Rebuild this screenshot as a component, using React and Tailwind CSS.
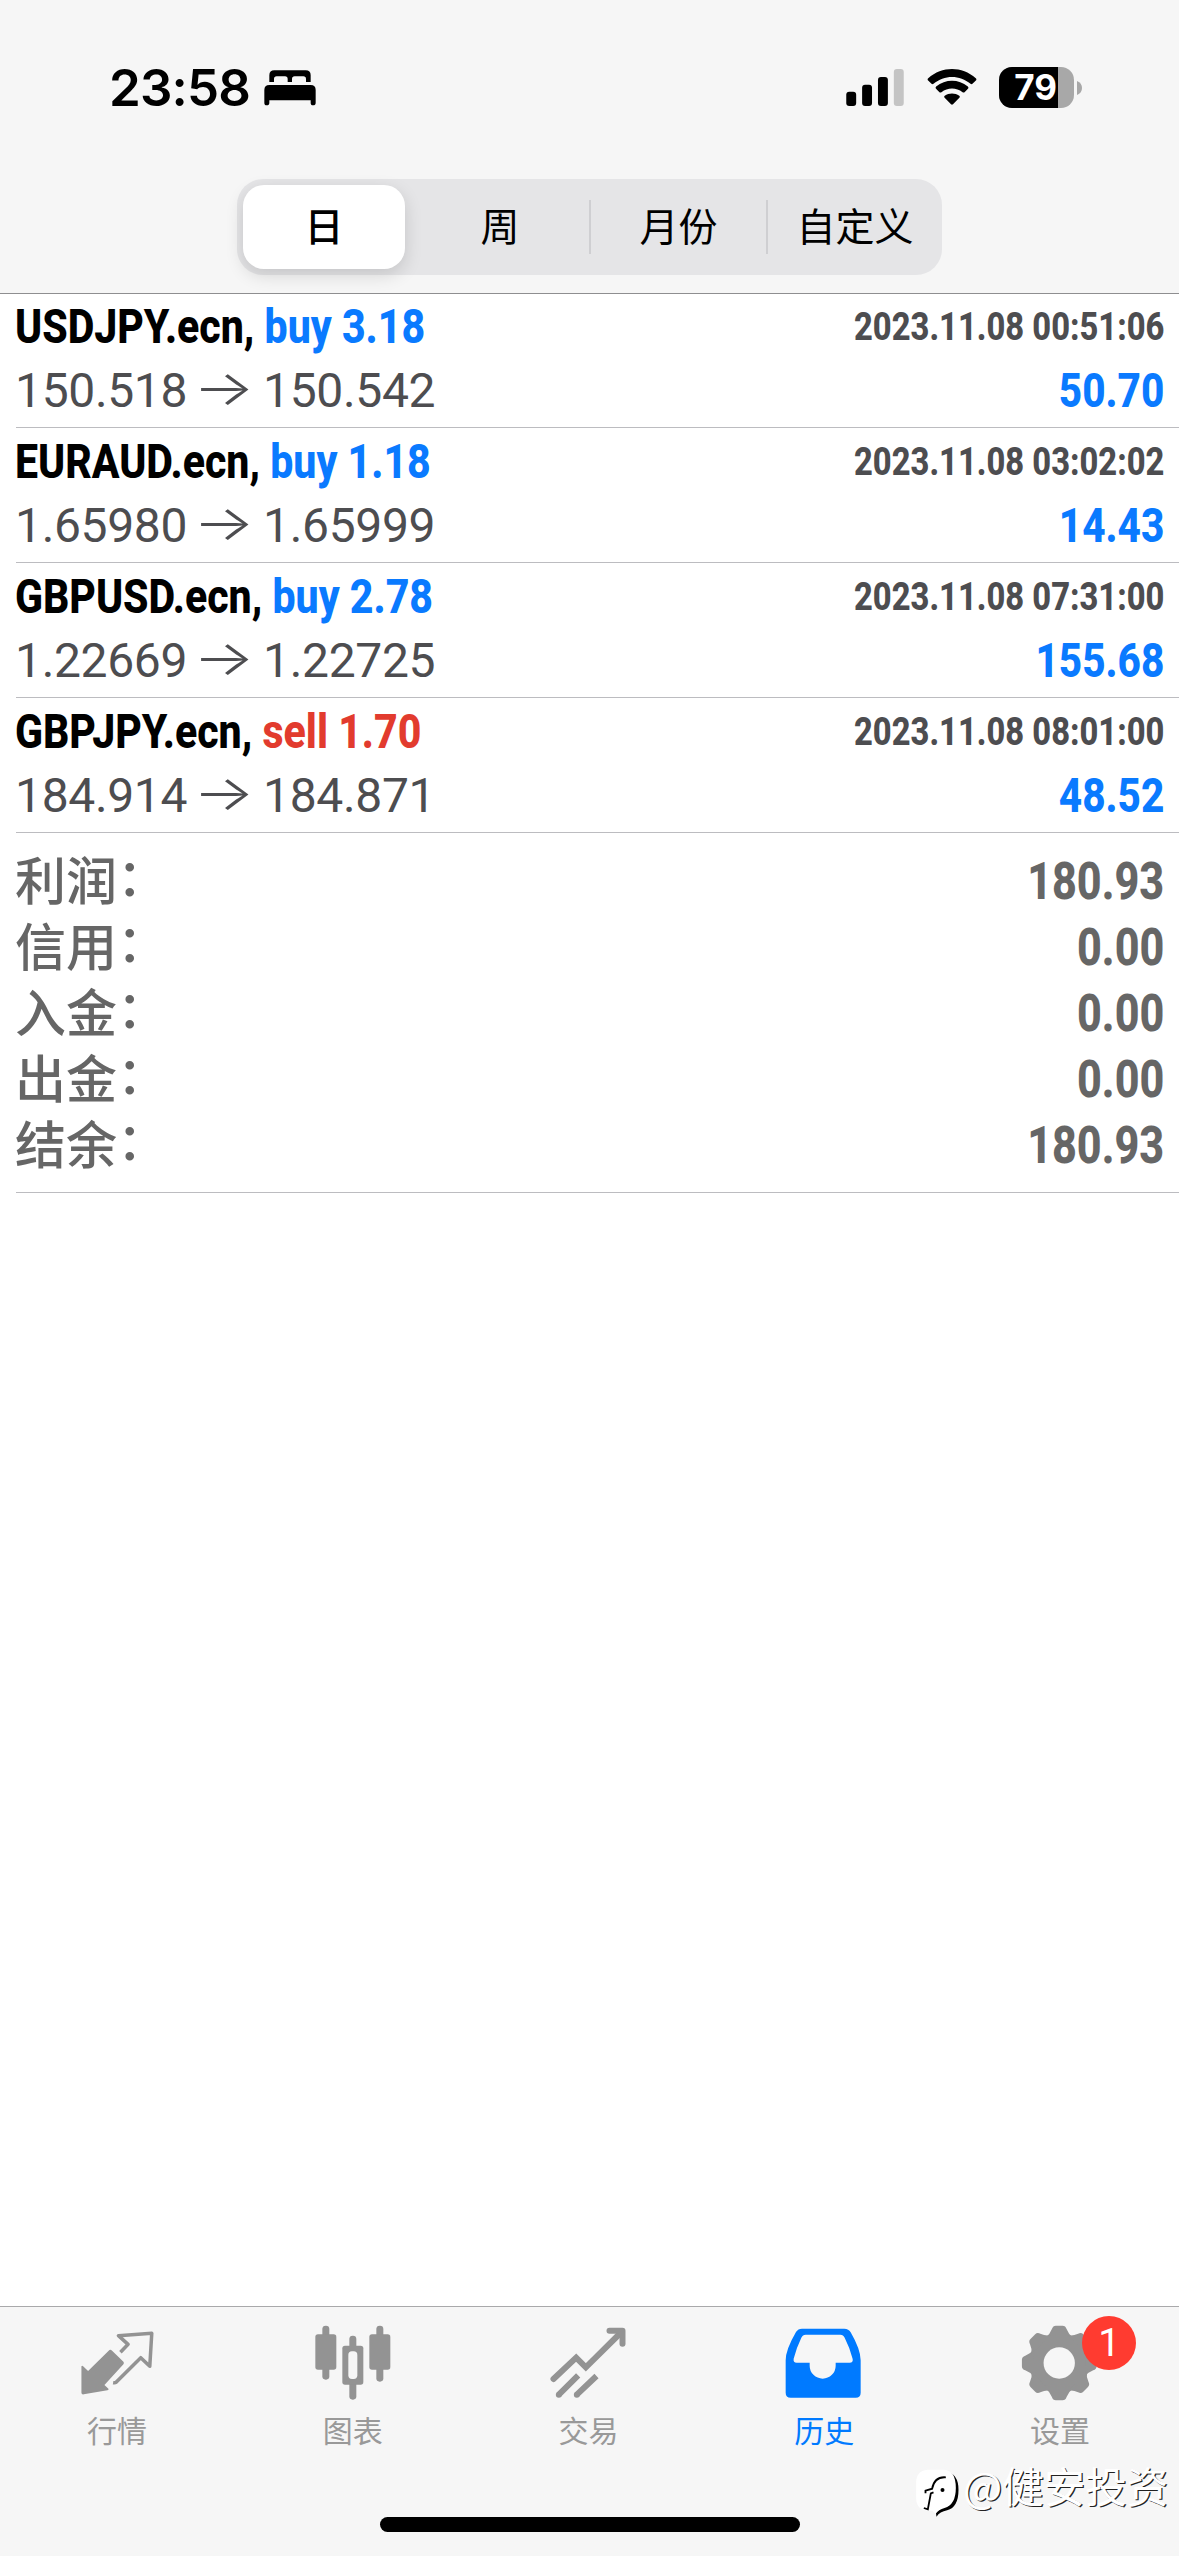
import React from "react";
import clsx from "clsx";

// Data
const periods = [
  { label: "日", width: "w-[174px]" },
  { label: "周", width: "w-[178px]" },
  { label: "月份", width: "w-[177px]" },
  { label: "自定义", width: "w-[176px]" },
];

const deals = [
  {
    symbol: "USDJPY.ecn",
    side: "buy",
    volume: "3.18",
    open: "150.518",
    close: "150.542",
    time: "2023.11.08 00:51:06",
    profit: "50.70",
  },
  {
    symbol: "EURAUD.ecn",
    side: "buy",
    volume: "1.18",
    open: "1.65980",
    close: "1.65999",
    time: "2023.11.08 03:02:02",
    profit: "14.43",
  },
  {
    symbol: "GBPUSD.ecn",
    side: "buy",
    volume: "2.78",
    open: "1.22669",
    close: "1.22725",
    time: "2023.11.08 07:31:00",
    profit: "155.68",
  },
  {
    symbol: "GBPJPY.ecn",
    side: "sell",
    volume: "1.70",
    open: "184.914",
    close: "184.871",
    time: "2023.11.08 08:01:00",
    profit: "48.52",
  },
];

const totals = [
  { label: "利润", value: "180.93" },
  { label: "信用", value: "0.00" },
  { label: "入金", value: "0.00" },
  { label: "出金", value: "0.00" },
  { label: "结余", value: "180.93" },
];

// Icons
const BedIcon = () => (
  <svg viewBox="0 0 156 108" className="h-9 w-[52px]" fill="#000">
    <path d="M16 36V16Q16 1 31 1H125Q140 1 140 16V36H126V27Q126 19 118 19H92Q84 19 84 27V36H71V27Q71 19 63 19H38Q30 19 30 27V36Z" />
    <path d="M1 60Q1 45 16 45H140Q155 45 155 60V98Q155 106 147 106Q140 106 140 98V91H16V98Q16 106 8 106Q1 106 1 98Z" />
  </svg>
);

const SignalIcon = () => (
  <svg viewBox="0 0 174 112" className="mr-px h-[37px] w-[58px]">
    <rect x="0" y="69" width="30" height="43" rx="9" />
    <rect x="48" y="48" width="30" height="64" rx="9" />
    <rect x="96" y="24" width="30" height="88" rx="9" />
    <rect x="144" y="0" width="30" height="112" rx="9" fill="#c4c4c4" />
  </svg>
);

const WifiIcon = () => (
  <svg viewBox="0 0 150 112" className="h-[37px] w-[50px]">
    <path d="M2 34Q0 31 3 28C45 -9 105 -9 147 28Q150 31 148 34L137 45Q134 47 131 45C99 17 51 17 19 45Q16 47 13 45Z" />
    <path d="M26 59Q24 56 27 53C55 30 95 30 123 53Q126 56 124 59L113 70Q110 72 107 70C88 55 62 55 43 70Q40 72 37 70Z" />
    <path d="M52 86Q50 83 53 81C66 72 84 72 97 81Q100 83 98 86L78 107Q75 110 72 107Z" />
  </svg>
);

const BatteryIcon = () => (
  <div className="flex items-center gap-[3px]">
    <div className="flex h-[41px] w-[75px] items-center overflow-hidden rounded-[13px] bg-[#a8a8a8]">
      <div className="flex h-full w-[59px] items-center justify-end bg-black pr-px font-['Inter'] text-[35px] font-bold text-white">
        79
      </div>
    </div>
    <svg viewBox="0 0 5 14" className="h-3.5 w-[5px]" fill="#a8a8a8">
      <path d="M0 0Q5 2 5 7T0 14Z" />
    </svg>
  </div>
);

const QuotesIcon = () => (
  <svg viewBox="227.7 100 252 240" className="h-20 w-[84px]">
    <path
      d="M328 181Q332 179 336 183L370 216Q373 220 370 224L313 286L325 297Q327 301 322 302L251 314Q244 315 244 309V230Q246 227 249 230L264 244Z"
      fill="#939393"
    />
    <path
      d="M361 188L384 164L355 138L455 131L449 230L422 204L348 278Q345 280 339 279"
      fill="none"
      stroke="#939393"
      strokeWidth="10.5"
      strokeLinejoin="round"
    />
  </svg>
);

const ChartIcon = () => (
  <svg viewBox="935 100 252 240" className="h-20 w-[84px]" fill="#939393">
    <rect x="966" y="108" width="21" height="162" rx="10" />
    <rect x="945" y="134" width="63" height="106" rx="8" />
    <rect x="1047" y="138" width="21" height="192" rx="10" />
    <rect x="1026" y="168" width="63" height="117" rx="8" />
    <rect x="1044" y="185" width="27" height="83" rx="11" fill="#f6f6f6" />
    <rect x="1128" y="108" width="21" height="168" rx="10" />
    <rect x="1107" y="134" width="63" height="106" rx="8" />
  </svg>
);

const TradeIcon = () => (
  <svg viewBox="142.5 100 252 240" className="h-20 w-[84px]">
    <g fill="none" stroke="#939393" strokeWidth="18" strokeLinecap="round">
      <path d="M162 268L230 204L259 233L366 127" />
      <path d="M330 123H369V162" strokeLinejoin="round" />
    </g>
    <g stroke="#939393" strokeWidth="18">
      <path d="M178 315L236 257M232 315L291 259" />
    </g>
    <circle cx="178" cy="315" r="9" fill="#939393" />
    <circle cx="232" cy="315" r="9" fill="#939393" />
  </svg>
);

const HistoryIcon = () => (
  <svg viewBox="850 100 252 240" className="h-20 w-[84px]">
    <path
      fillRule="evenodd"
      fill="#007aff"
      d="M907 117H1034Q1047 117 1053 128Q1083 180 1083 212V309Q1083 324 1068 324H873Q858 324 858 309V212Q858 180 889 127Q895 117 907 117ZM918 135Q909 135 905 144Q890 175 882 207Q880 219 891 219H930V228A39 39 0 0 0 1008 228V219H1050Q1061 219 1059 208Q1051 175 1035 144Q1031 135 1022 135Z"
    />
  </svg>
);

const SettingsIcon = () => (
  <svg viewBox="417.3 100 252 240" className="h-20 w-[84px]">
    <g fill="#939393">
      <circle cx="538" cy="220" r="88" />
      {[0, 45, 90, 135, 180, 225, 270, 315].map((deg) => (
        <path
          key={deg}
          transform={`rotate(${deg} 538 220)`}
          d="M498 142Q510 134 516 118Q519 108 528 108H548Q557 108 560 118Q566 134 578 142Z"
        />
      ))}
    </g>
    <circle cx="538" cy="220" r="47" fill="#f6f6f6" />
  </svg>
);

const tabs = [
  { label: "行情", icon: QuotesIcon },
  { label: "图表", icon: ChartIcon },
  { label: "交易", icon: TradeIcon },
  { label: "历史", icon: HistoryIcon, active: true },
  { label: "设置", icon: SettingsIcon, badge: 1 },
];

// Header
function StatusBar() {
  return (
    <div className="flex h-[179px] items-start justify-between pt-[63px] pr-[97px] pl-[109px]">
      <div className="flex h-[49px] items-center gap-3.5">
        <span className="font-['Inter'] text-[51px] leading-none font-semibold tracking-[-0.8px]">
          23:58
        </span>
        <BedIcon />
      </div>
      <div className="flex h-[49px] items-center gap-[22px]">
        <SignalIcon />
        <WifiIcon />
        <BatteryIcon />
      </div>
    </div>
  );
}

function PeriodPicker() {
  return (
    <div className="mx-auto flex h-24 w-[705px] items-center rounded-[26px] bg-[#e5e5e7]">
      {periods.map(({ label, width }, i) => (
        <div
          key={label}
          className={clsx(
            "flex items-center justify-center text-[39px] leading-none",
            width,
            i === 0 ? "h-full px-1.5 font-medium" : "h-[54px]",
            i > 1 && "border-l-2 border-[#cfcfd2]"
          )}
        >
          {i === 0 ? (
            <div className="flex h-[84px] w-full items-center justify-center rounded-[21px] bg-white shadow-[0_6px_18px_rgba(0,0,0,0.14)]">
              {label}
            </div>
          ) : (
            label
          )}
        </div>
      ))}
    </div>
  );
}

// History list
function DealRow({ deal }) {
  return (
    <div className="ml-4 flex h-[135px] justify-between border-b border-[#bcbcc0] pt-px pr-[15px]">
      <div className="-ml-px">
        <div className="h-[66px] origin-left scale-x-[0.855] font-['Roboto'] text-[48px] leading-[66px] font-extrabold whitespace-pre">
          {deal.symbol},{" "}
          <span
            className={deal.side === "buy" ? "text-[#0a7aff]" : "text-[#e23b2e]"}
          >
            {deal.side} {deal.volume}
          </span>
        </div>
        <div className="flex h-[62px] items-center font-['Roboto'] text-[48px] leading-[62px] tracking-[-0.35px] text-[#4d4d50]">
          <span>{deal.open}</span>
          <span className="mr-4 ml-3.5 flex w-[46px] -translate-y-[3px] justify-center">
            <span className="scale-x-[1.35] font-['Inter'] font-light">→</span>
          </span>
          <span>{deal.close}</span>
        </div>
      </div>
      <div className="text-right font-['Roboto'] font-extrabold">
        <div className="h-[66px] origin-right scale-x-[0.838] text-[39px] leading-[66px] text-[#4d4d50]">
          {deal.time}
        </div>
        <div className="origin-right scale-x-[0.845] text-[48px] leading-[62px] text-[#0a7aff]">
          {deal.profit}
        </div>
      </div>
    </div>
  );
}

function Totals() {
  return (
    <div className="ml-4 h-[360px] border-b border-[#bcbcc0] pt-4 pr-[15px] text-[#666]">
      {totals.map(({ label, value }) => (
        <div key={label} className="flex h-[66px] items-center justify-between">
          <span className="-ml-px pt-px text-[51px] leading-[66px] font-medium">
            {label}
            <span className="inline-block -translate-y-1">：</span>
          </span>
          <span className="origin-right scale-x-[0.845] font-['Roboto'] text-[51px] leading-[66px] font-extrabold">
            {value}
          </span>
        </div>
      ))}
    </div>
  );
}

// Bottom navigation
function TabBar() {
  return (
    <div className="h-[250px] border-t border-[#a9a9ab] bg-[#f6f6f6]">
      <div className="flex pt-4">
        {tabs.map(({ label, icon: Icon, active, badge }) => (
          <div
            key={label}
            className={clsx(
              "relative flex flex-1 flex-col items-center",
              active ? "text-[#007aff]" : "text-[#999]"
            )}
          >
            <Icon />
            <span className="mt-[11px] mr-0.5 text-[30px] leading-[36px]">
              {label}
            </span>
            {badge && (
              <span className="absolute -top-[7px] left-[139px] flex size-[54px] items-center justify-center rounded-full bg-[#ff3b30] font-['Roboto'] text-[39px] leading-none text-white">
                {badge}
              </span>
            )}
          </div>
        ))}
      </div>
      <div className="mx-auto mt-[67px] h-[15px] w-[420px] rounded-full bg-black" />
    </div>
  );
}

function Watermark() {
  return (
    <div className="absolute top-[2460px] left-[914px] flex items-start gap-0.5">
      <svg viewBox="105 535 140 150" className="mt-2 h-[50px] w-[47px]">
        <path
          d="M200 545Q238 553 238 600Q238 652 204 662Q182 666 172 681L168 655Z"
          fill="#000"
        />
        <path
          d="M145 540H195Q230 542 230 595Q230 645 196 655Q178 660 169 673L160 663H145Q111 660 111 625V578Q111 543 145 540Z"
          fill="#fff"
        />
        <path
          d="M200 563Q166 560 159 597L139 603V611M163 608L155 611L146 659L134 655"
          fill="none"
          stroke="#000"
          strokeWidth="5.5"
        />
        <circle cx="190" cy="601" r="6" fill="#000" />
      </svg>
      <span className="font-['Noto_Sans_CJK_SC',sans-serif] text-[41.5px] leading-[50px] whitespace-nowrap text-white [text-shadow:1.2px_1.2px_0_#222]">
        @健安投资
      </span>
    </div>
  );
}

const App = () => {
  return (
    <div className="relative flex h-[2556px] w-[1179px] flex-col overflow-hidden bg-white font-['Liberation_Sans','Noto_Sans_CJK_SC',sans-serif] text-black">
      <div className="h-[294px] border-b border-[#8e8e90] bg-[#f6f6f6]">
        <StatusBar />
        <PeriodPicker />
      </div>
      <div className="-mt-px flex-1">
        {deals.map((deal) => (
          <DealRow key={deal.time} deal={deal} />
        ))}
        <Totals />
      </div>
      <TabBar />
      <Watermark />
    </div>
  );
};

export default App;
